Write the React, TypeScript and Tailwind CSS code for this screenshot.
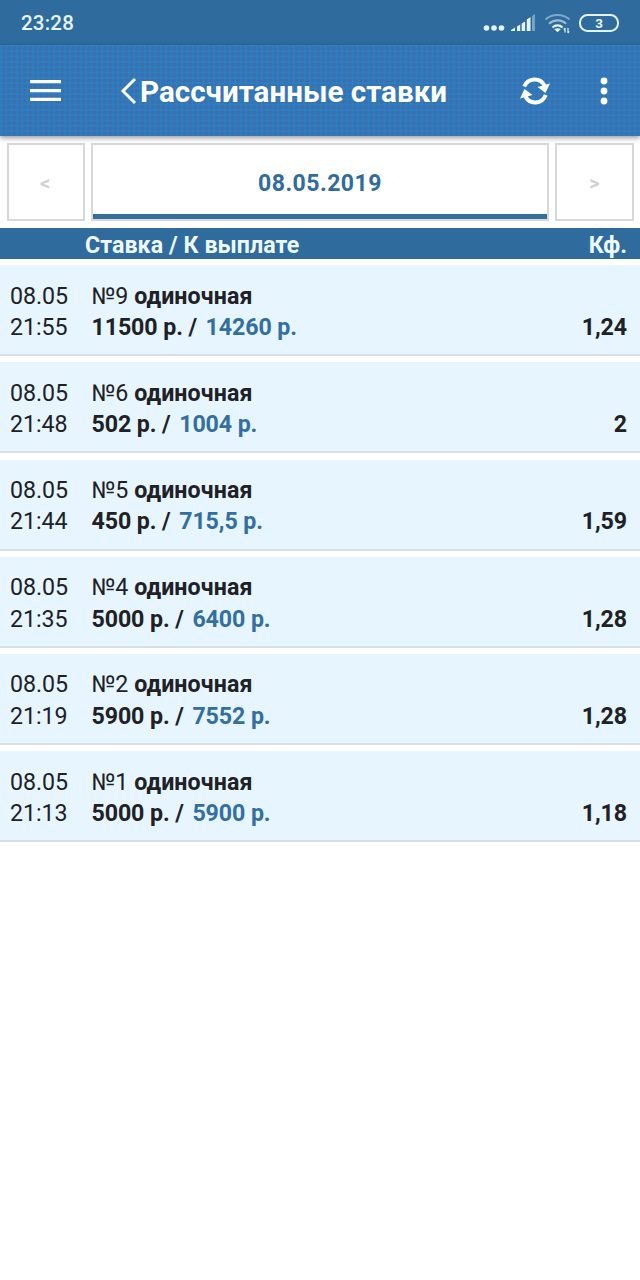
import { clsx } from "clsx";

type Bet = {
  id: number;
  time: string;
  stake: string;
  payout: string;
  odds: string;
};

const bets: Bet[] = [
  { id: 9, time: "21:55", stake: "11500", payout: "14260", odds: "1,24" },
  { id: 6, time: "21:48", stake: "502", payout: "1004", odds: "2" },
  { id: 5, time: "21:44", stake: "450", payout: "715,5", odds: "1,59" },
  { id: 4, time: "21:35", stake: "5000", payout: "6400", odds: "1,28" },
  { id: 2, time: "21:19", stake: "5900", payout: "7552", odds: "1,28" },
  { id: 1, time: "21:13", stake: "5000", payout: "5900", odds: "1,18" },
];

function StatusBar() {
  return (
    <div className="flex h-[45px] items-center bg-[#2f6b9d] pl-[21px] pr-[21px] text-[#e4f4ff]">
      <span className="pt-px text-[20.500px] font-medium leading-none tracking-[0.200px]">23:28</span>
      <svg className="ml-auto" width="136" height="24" viewBox="483 11 136 24" fill="currentColor" aria-hidden="true">
        <circle cx="486.5" cy="28" r="2.8" />
        <circle cx="494" cy="28" r="2.8" />
        <circle cx="501.5" cy="28" r="2.8" />
        <path d="M511 31v-1l4-2.500V31zM517 31v-4.500l3.200-2V31zM521.700 31v-7.500l3.400-2V31zM526.800 31V19.500l3.700-2.500V31z" />
        <path d="M532 31V16l3-2V31z" opacity=".4" />
        <g fill="none" stroke="currentColor" strokeWidth="2.200">
          <path d="M545.5 19.500c6.500-6 17.500-6 24 0" opacity=".45" />
          <path d="M549 23.800c4.800-4.500 12.500-4.500 17 0" opacity=".6" />
          <path d="M552.500 27.500c2.800-2.700 7.200-2.700 10 0" />
        </g>
        <path d="M554.300 29.300c1.800-1.500 4.800-1.500 6.400 0l-3.200 3z" />
        <path d="M565 28v4.500M563.800 29.500l1.200-1.500M568 28v5M568 33l1.200-1.500" fill="none" stroke="currentColor" strokeWidth="1.200" />
        <rect x="580" y="15" width="38" height="16" rx="7.500" fill="none" stroke="currentColor" strokeWidth="2" />
        <path d="M615 20.500a5 5 0 0 1 0 4z" fill="#a03468" />
        <text x="599" y="27.500" textAnchor="middle" fontSize="13.500" fontWeight="700">3</text>
      </svg>
    </div>
  );
}

function Header() {
  return (
    <header className="relative z-10 flex h-[91px] items-center bg-[#3a70ae] bg-[linear-gradient(to_right,#2585cb8c_2px,transparent_2px),linear-gradient(to_bottom,#2585cb8c_2px,transparent_2px)] bg-[length:5.340px_5.340px] pl-[30px] pr-[32px] text-white shadow-[0_2px_5px_rgba(0,0,0,0.4)]">
      <svg width="31" height="22" viewBox="0 0 31 22" fill="currentColor" aria-hidden="true">
        <path d="M0 0h31v3.200H0zM0 9h31v3.200H0zM0 17.800h31V21H0z" />
      </svg>
      <svg className="ml-[59px]" width="18" height="28" viewBox="0 0 18 28" fill="none" stroke="currentColor" strokeWidth="3" aria-hidden="true">
        <path d="M15 2L3 14l12 12" />
      </svg>
      <h1 className="ml-[2px] pt-[5px] text-[29.600px] font-bold leading-none">Рассчитанные ставки</h1>
      <svg className="ml-auto" width="30" height="30" viewBox="0 0 30 30" aria-hidden="true">
        <g fill="none" stroke="currentColor" strokeWidth="4">
          <path d="M4.200 10.500C8 1.800 20 .9 24.500 9.500" />
          <path d="M25.800 19C22 28.200 10 29.100 5.500 20.500" />
        </g>
        <path d="M17.500 11L30 7.500l-4.500 9.500zM12.500 19L0 22.500 4.500 13z" fill="currentColor" />
      </svg>
      <svg className="ml-[50px]" width="8" height="28" viewBox="0 0 8 28" fill="currentColor" aria-hidden="true">
        <circle cx="4" cy="4" r="3.400" />
        <circle cx="4" cy="14" r="3.400" />
        <circle cx="4" cy="24" r="3.400" />
      </svg>
    </header>
  );
}

function DateSwitcher() {
  const arrow = "h-[78px] border-2 border-[#d8d8d8] pt-[2px] text-[20px] font-bold text-[#d2d2d2]";
  return (
    <div className="flex h-[92px] gap-[6px] pl-[7px] pt-[7px]">
      <button className={clsx(arrow, "w-[78px] pr-[2px]")}>&lt;</button>
      <div className="flex h-[78px] w-[458px] flex-col border-2 border-[#d8d8d8]">
        <div className="flex flex-1 items-center justify-center pt-[9px] text-[23px] font-bold tracking-[0.500px] text-[#2f6b9d]">
          08.05.2019
        </div>
        <div className="h-[5px] bg-[#336e9e]" />
      </div>
      <button className={clsx(arrow, "w-[79px]")}>&gt;</button>
    </div>
  );
}

function BetRow({ bet }: { bet: Bet }) {
  return (
    <li className="flex h-[91px] border-b-2 border-[#d8dfe4] bg-[#e6f5ff] pl-[10px] pr-[13px] pt-[15.500px] text-[23.200px] leading-[31.400px] text-[#202124]">
      <div className="w-[81.500px] tracking-[-0.050px]">
        <p>08.05</p>
        <p>{bet.time}</p>
      </div>
      <div className="flex-1">
        <p>
          №{bet.id} <b className="tracking-[0.100px]">одиночная</b>
        </p>
        <p className="font-bold tracking-[-0.100px]">
          {bet.stake} р. / <span className="ml-[3px] text-[#336f9f]">{bet.payout} р.</span>
        </p>
      </div>
      <p className="self-start pt-[31.400px] font-bold tracking-[-0.100px]">{bet.odds}</p>
    </li>
  );
}

export default function App() {
  return (
    <div className="min-h-[1280px] w-[640px] bg-white font-['Roboto',sans-serif]">
      <StatusBar />
      <Header />
      <DateSwitcher />
      <div className="flex h-[31px] items-center justify-between bg-[#2f6b9d] pl-[85px] pr-[13px] pt-[4px] text-[23.200px] font-bold leading-none text-[#eef9ff]">
        <span className="tracking-[0.070px]">Ставка / К выплате</span>
        <span>Кф.</span>
      </div>
      <ul className="mt-[6.200px] flex flex-col gap-[6.200px]">
        {bets.map((bet) => (
          <BetRow key={bet.id} bet={bet} />
        ))}
      </ul>
    </div>
  );
}
